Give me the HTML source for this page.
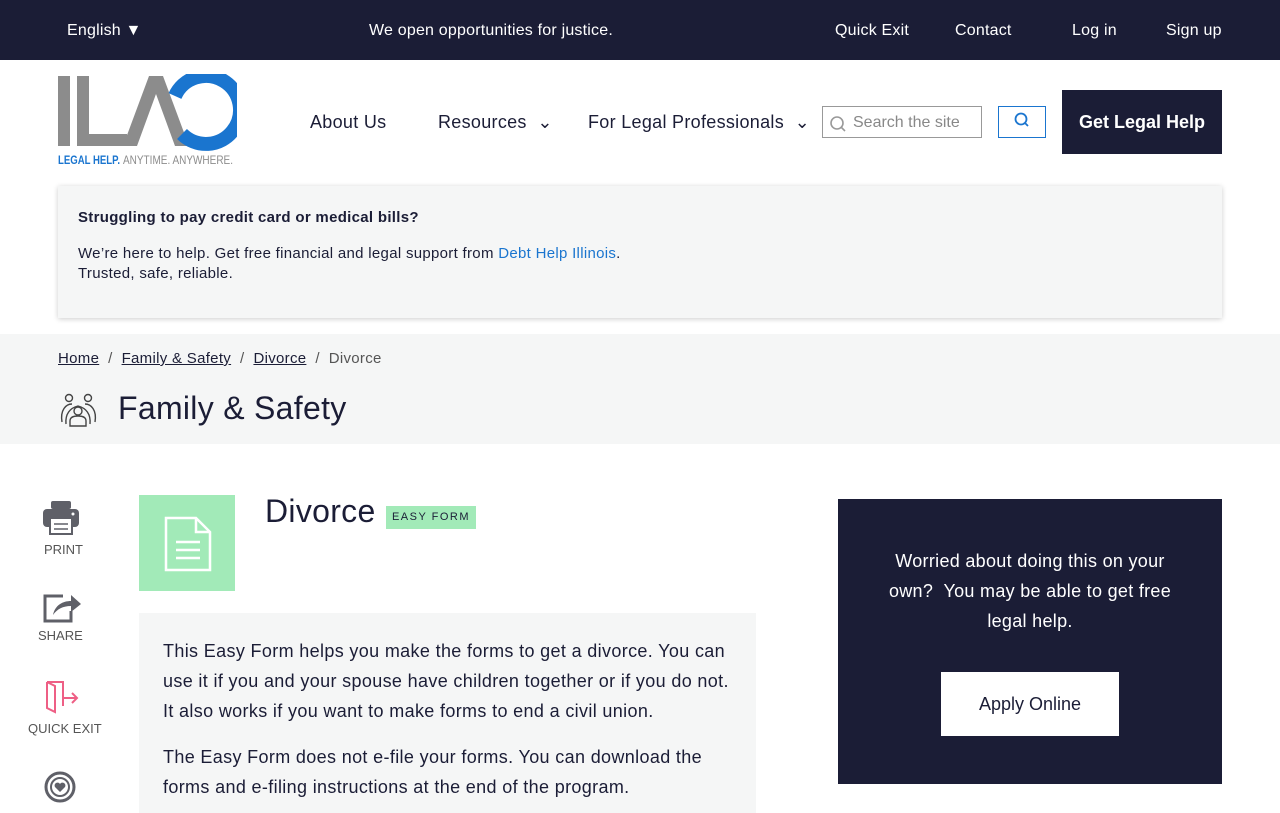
<!DOCTYPE html>
<html><head><meta charset="utf-8"><style>
*{box-sizing:border-box;margin:0;padding:0}
body{width:1280px;height:800px;overflow:hidden;font-family:"Liberation Sans",sans-serif;color:#1b1d36;background:#fff;position:relative}
.abs{position:absolute}
.top{position:absolute;left:0;top:0;width:1280px;height:60px;background:#1b1d36;color:#fff;font-size:16px}
.top span{position:absolute;top:22px;letter-spacing:.2px}
.nav{font-size:18px;color:#1b1d36;top:112px;letter-spacing:.3px}
a{color:#1b1d36;text-decoration:underline}
</style></head><body>
<div class="top">
<span style="left:67px">English ▼</span>
<span style="left:369px">We open opportunities for justice.</span>
<span style="left:835px">Quick Exit</span>
<span style="left:955px">Contact</span>
<span style="left:1072px">Log in</span>
<span style="left:1166px">Sign up</span>
</div>
<svg class="abs" style="left:57px;top:74px" width="180" height="94" viewBox="0 0 180 94">
<rect x="1" y="2" width="12" height="70" fill="#8c8c8c"/>
<polygon points="20,2 32,2 32,60 70,60 70,72 20,72" fill="#8c8c8c"/>
<polygon points="66,72 92,2 106,2 132,72 118,72 99,20 80,72" fill="#8c8c8c"/>
<path d="M118 22 A34 34 0 1 1 125 60" fill="none" stroke="#1a75cf" stroke-width="14"/>
<text x="1" y="90" font-family="Liberation Sans" font-weight="bold" font-size="12" fill="#1a75cf" textLength="62" lengthAdjust="spacingAndGlyphs">LEGAL HELP.</text>
<text x="66" y="90" font-family="Liberation Sans" font-size="12" fill="#8c8c8c" textLength="110" lengthAdjust="spacingAndGlyphs">ANYTIME. ANYWHERE.</text>
</svg>
<span class="abs nav" style="left:310px">About Us</span>
<span class="abs nav" style="left:438px">Resources &nbsp;⌄</span>
<span class="abs nav" style="left:588px">For Legal Professionals &nbsp;⌄</span>
<div class="abs" style="left:822px;top:106px;width:160px;height:32px;border:1px solid #999;color:#888;font-size:16px;padding:7px 0 0 30px">Search the site</div>
<svg class="abs" style="left:829px;top:115px" width="18" height="18"><circle cx="8" cy="8" r="6" fill="none" stroke="#999" stroke-width="1.6"/><line x1="12" y1="12" x2="16" y2="16" stroke="#999" stroke-width="1.6"/></svg>
<div class="abs" style="left:998px;top:106px;width:48px;height:32px;border:1.5px solid #1a75cf"></div>
<svg class="abs" style="left:1013px;top:112px" width="18" height="18"><circle cx="8" cy="7" r="5.5" fill="none" stroke="#1a75cf" stroke-width="1.8"/><line x1="12" y1="11" x2="15" y2="14" stroke="#1a75cf" stroke-width="1.8"/></svg>
<div class="abs" style="left:1062px;top:90px;width:160px;height:64px;background:#1b1d36;color:#fff;font-size:18px;font-weight:bold;text-align:center;line-height:64px">Get Legal Help</div>
<div class="abs" style="left:58px;top:186px;width:1164px;height:132px;background:#f5f6f6;box-shadow:0 1px 5px rgba(0,0,0,.2);padding:22px 20px;font-size:15px;line-height:20px;letter-spacing:.3px">
<div style="font-weight:bold;margin-bottom:16px">Struggling to pay credit card or medical bills?</div>
<div>We’re here to help. Get free financial and legal support from <span style="color:#1a75cf">Debt Help Illinois</span>.</div>
<div>Trusted, safe, reliable.</div>
</div>
<div class="abs" style="left:0;top:334px;width:1280px;height:110px;background:#f5f6f6"></div>
<div class="abs" style="left:58px;top:350px;font-size:15px;color:#555;letter-spacing:.3px"><a>Home</a> &nbsp;/ &nbsp;<a>Family &amp; Safety</a> &nbsp;/ &nbsp;<a>Divorce</a> &nbsp;/ &nbsp;Divorce</div>
<svg class="abs" style="left:58px;top:392px" width="42" height="36" viewBox="0 0 42 36" fill="none" stroke="#444" stroke-width="1.4">
<circle cx="11" cy="6" r="3.5"/><circle cx="30" cy="6" r="3.5"/><circle cx="20" cy="19" r="4"/>
<path d="M4 30 C2 18 8 12 14 12"/><path d="M37 30 C39 18 33 12 27 12"/><path d="M8 32 C7 22 12 16 20 14 C28 16 33 22 32 32"/><path d="M12 34 L12 29 C12 25 16 24 20 24 C24 24 28 25 28 29 L28 34 Z"/>
</svg>
<div class="abs" style="left:118px;top:390px;font-size:32px;letter-spacing:.3px">Family &amp; Safety</div>
<svg class="abs" style="left:43px;top:501px" width="36" height="34" viewBox="0 0 36 34"><rect x="8" y="0" width="20" height="8" rx="2" fill="#5f6068"/><rect x="0" y="8" width="36" height="18" rx="4" fill="#5f6068"/><rect x="7" y="17" width="22" height="16" fill="#fff" stroke="#5f6068" stroke-width="2"/><line x1="11" y1="23" x2="25" y2="23" stroke="#5f6068" stroke-width="1.5"/><line x1="11" y1="28" x2="25" y2="28" stroke="#5f6068" stroke-width="1.5"/><circle cx="30" cy="13" r="1.5" fill="#fff"/></svg>
<div class="abs" style="left:44px;top:542px;font-size:13px;color:#555">PRINT</div>
<svg class="abs" style="left:43px;top:593px" width="38" height="30" viewBox="0 0 38 30"><path d="M20 3 H2 V28 H28 V18" fill="none" stroke="#5f6068" stroke-width="3"/><path d="M10 22 C12 12 20 8 28 8 V2 L38 11 L28 19 V13 C20 13 14 16 10 22Z" fill="#5f6068"/></svg>
<div class="abs" style="left:38px;top:628px;font-size:13px;color:#555">SHARE</div>
<svg class="abs" style="left:45px;top:680px" width="36" height="34" viewBox="0 0 36 34" fill="none" stroke="#ee5f85" stroke-width="2"><path d="M2 2 H18 V26"/><path d="M2 2 V28 L10 32 V6 L2 2"/><path d="M18 18 H32 M27 13 L32 18 L27 23"/></svg>
<div class="abs" style="left:28px;top:721px;font-size:13px;color:#555">QUICK EXIT</div>
<svg class="abs" style="left:44px;top:771px" width="32" height="32"><circle cx="16" cy="16" r="14" fill="none" stroke="#5f6068" stroke-width="3"/><circle cx="16" cy="16" r="9" fill="none" stroke="#5f6068" stroke-width="2"/><path d="M16 21 L11 16 A2.5 2.5 0 0 1 16 13 A2.5 2.5 0 0 1 21 16Z" fill="#5f6068"/></svg>
<div class="abs" style="left:139px;top:495px;width:96px;height:96px;background:#a2eab8"></div>
<svg class="abs" style="left:164px;top:516px" width="48" height="56" viewBox="0 0 48 56" fill="none" stroke="#fff" stroke-width="2.5"><path d="M2 2 H32 L46 16 V54 H2 Z"/><path d="M32 2 V16 H46"/><line x1="12" y1="26" x2="36" y2="26"/><line x1="12" y1="34" x2="36" y2="34"/><line x1="12" y1="42" x2="36" y2="42"/></svg>
<div class="abs" style="left:265px;top:493px;font-size:32px;letter-spacing:.3px">Divorce</div>
<div class="abs" style="left:386px;top:506px;width:90px;height:23px;background:#a2eab8;font-size:11px;letter-spacing:1.5px;text-align:center;line-height:23px">EASY FORM</div>
<div class="abs" style="left:139px;top:613px;width:617px;height:200px;background:#f5f6f6;padding:23px 24px;font-size:18px;line-height:30px;color:#1b1d36;letter-spacing:.35px">
<p style="margin-bottom:16px">This Easy Form helps you make the forms to get a divorce. You can use it if you and your spouse have children together or if you do not. It also works if you want to make forms to end a civil union.</p>
<p>The Easy Form does not e-file your forms. You can download the forms and e-filing instructions at the end of the program.</p>
</div>
<div class="abs" style="left:838px;top:499px;width:384px;height:285px;background:#1b1d36;color:#fff;text-align:center;font-size:18px;line-height:30px;padding:47px 45px 0;letter-spacing:.3px">Worried about doing this on your own?&nbsp; You may be able to get free legal help.</div>
<div class="abs" style="left:941px;top:672px;width:178px;height:64px;background:#fff;font-size:18px;text-align:center;line-height:64px">Apply Online</div>
</body></html>
